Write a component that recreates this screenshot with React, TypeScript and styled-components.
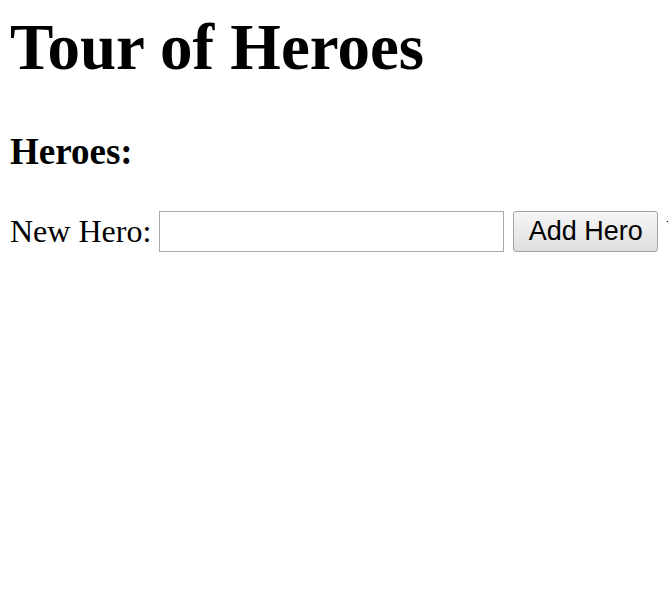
import React, { useState } from 'react';
import styled, { createGlobalStyle } from 'styled-components';

const GlobalStyle = createGlobalStyle`
  html, body {
    margin: 0;
    padding: 0;
    background: #ffffff;
    overflow: hidden;
  }
  body {
    font-family: "Liberation Serif", "Times New Roman", serif;
    color: #000000;
  }
`;

const Page = styled.div`
  padding: 10px 0 0 10px;
  width: 668px;
  height: 592px;
  box-sizing: border-box;
  overflow: hidden;
`;

const Title = styled.h1`
  margin: 0 0 45px;
  font-size: 65px;
  font-weight: bold;
  line-height: normal;
`;

const SubTitle = styled.h3`
  margin: 0 0 38px;
  font-size: 37px;
  font-weight: bold;
  line-height: normal;
`;

const AddRow = styled.div`
  display: flex;
  align-items: center;
  white-space: nowrap;
  height: 40px;
  & > * {
    flex-shrink: 0;
  }
`;

const Label = styled.label`
  font-size: 32px;
  line-height: normal;
  margin-right: 8px;
`;

const NameInput = styled.input`
  box-sizing: border-box;
  width: 345px;
  height: 41px;
  margin: 0 9px 0 0;
  padding: 2px 6px;
  border: 1px solid #a9a9a9;
  font-family: "Liberation Sans", Arial, sans-serif;
  font-size: 26px;
  outline: none;
`;

const AddButton = styled.button`
  box-sizing: border-box;
  width: 145px;
  height: 41px;
  margin: 0 8px 0 0;
  padding: 0;
  border: 1px solid #a3a3a3;
  border-radius: 3px;
  background: linear-gradient(#f6f6f6, #dedede);
  font-family: "Liberation Sans", Arial, sans-serif;
  font-size: 27px;
  color: #000000;
`;

const Trailing = styled.span`
  font-size: 32px;
  line-height: normal;
`;

export default function App() {
  const [name, setName] = useState('');
  return (
    <>
      <GlobalStyle />
      <Page>
        <Title>Tour of Heroes</Title>
        <SubTitle>Heroes:</SubTitle>
        <AddRow>
          <Label>New Hero:</Label>
          <NameInput value={name} onChange={e => setName(e.target.value)} />
          <AddButton onClick={() => setName('')}>Add Hero</AddButton>
          <Trailing>View</Trailing>
        </AddRow>
      </Page>
    </>
  );
}
